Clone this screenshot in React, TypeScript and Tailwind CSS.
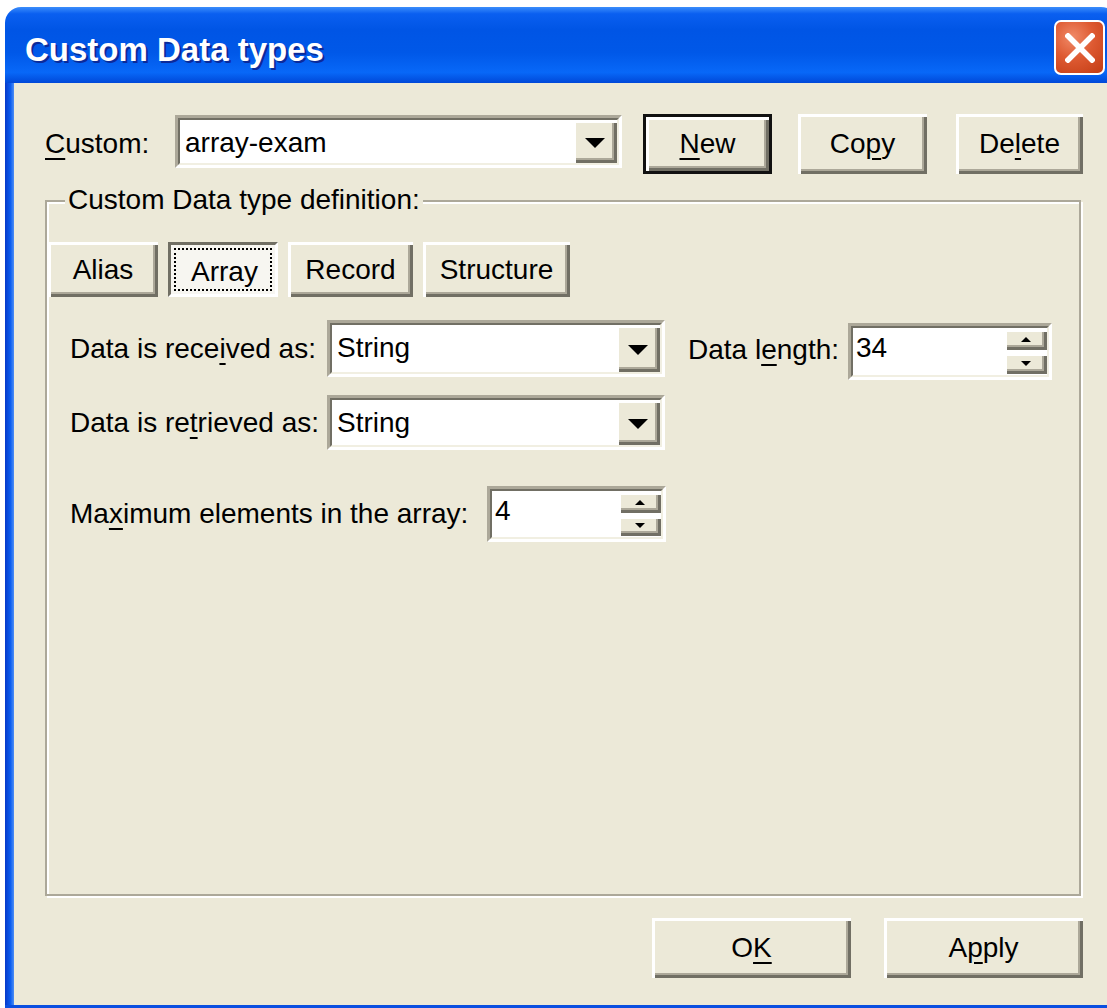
import type { ReactNode } from "react";

const FACE = "bg-[#ece9d8]";

// classic 3D raised edge: white top-left, dark bottom-right
const RAISED =
  "shadow-[inset_3px_3px_0_#ffffff,inset_-3px_-3px_0_#716f64,inset_-5px_-5px_0_#aca899]";

function Mn({ children }: { children: ReactNode }) {
  return <span className="underline decoration-2 underline-offset-[5px]">{children}</span>;
}

function Button({
  children,
  className = "",
  isDefault = false,
}: {
  children: ReactNode;
  className?: string;
  isDefault?: boolean;
}) {
  if (isDefault) {
    return (
      <div className={`border-[3px] border-[#111] ${className}`}>
        <div className={`flex h-full w-full items-center justify-center ${FACE} ${RAISED}`}>
          {children}
        </div>
      </div>
    );
  }
  return (
    <div className={`flex items-center justify-center ${FACE} ${RAISED} ${className}`}>
      {children}
    </div>
  );
}

function Sunken({ children, className = "" }: { children: ReactNode; className?: string }) {
  return (
    <div
      className={`border-[3px] border-t-[#aca899] border-l-[#aca899] border-r-white border-b-white ${className}`}
    >
      <div className="flex h-full w-full border-[2px] border-t-[#716f64] border-l-[#716f64] border-r-[#f1efe2] border-b-[#f1efe2] bg-white">
        {children}
      </div>
    </div>
  );
}

function DownArrow({ w = 20, h = 10 }: { w?: number; h?: number }) {
  return (
    <svg width={w} height={h} viewBox={`0 0 ${w} ${h}`}>
      <polygon points={`0,0 ${w},0 ${w / 2},${h}`} fill="#000" />
    </svg>
  );
}

function UpArrow({ w = 10, h = 5 }: { w?: number; h?: number }) {
  return (
    <svg width={w} height={h} viewBox={`0 0 ${w} ${h}`}>
      <polygon points={`0,${h} ${w},${h} ${w / 2},0`} fill="#000" />
    </svg>
  );
}

function Combo({ value, className = "" }: { value: string; className?: string }) {
  return (
    <Sunken className={className}>
      <span className="flex-1 pl-[5px] pt-[1px] leading-[44px]">{value}</span>
      <div className={`w-[44px] flex items-center justify-center pt-[2px] ${FACE} ${RAISED}`}>
        <DownArrow />
      </div>
    </Sunken>
  );
}

function Spin({ value, className = "" }: { value: string; className?: string }) {
  return (
    <Sunken className={className}>
      <span className="flex-1 pl-[3px] leading-[40px]">{value}</span>
      <div className="flex w-[43px] flex-col gap-[3px] py-[1px]">
        <div className={`flex flex-1 items-center justify-center ${FACE} ${RAISED}`}>
          <UpArrow />
        </div>
        <div className={`flex flex-1 items-center justify-center ${FACE} ${RAISED}`}>
          <svg width={10} height={5} viewBox="0 0 10 5">
            <polygon points="0,0 10,0 5,5" fill="#000" />
          </svg>
        </div>
      </div>
    </Sunken>
  );
}

function TitleBar() {
  return (
    <div className="flex h-[76px] items-start justify-between bg-[linear-gradient(180deg,#3b8dfb_0%,#0a5ff0_9%,#0055e5_30%,#0058e8_60%,#0868f8_86%,#0048d8_100%)]">
      <span className="pl-[20px] pt-[26px] text-[33px] font-bold leading-none text-white [text-shadow:2px_2px_0_#0b2a9a]">
        Custom Data types
      </span>
      <div className="mr-[12px] mt-[13px] flex h-[55px] w-[51px] items-center justify-center rounded-[7px] border-2 border-white bg-[radial-gradient(circle_at_35%_30%,#f08a68_0%,#de5a32_45%,#c23c14_100%)]">
        <svg width={30} height={30} viewBox="0 0 30 30">
          <path d="M3 3 L27 27 M27 3 L3 27" stroke="#fff" strokeWidth={5.5} strokeLinecap="square" />
        </svg>
      </div>
    </div>
  );
}

function Tabs() {
  return (
    <div className="flex h-[55px] gap-[10px]">
      <Button className="w-[110px]">Alias</Button>
      <div className="w-[110px] border-[3px] border-t-[#716f64] border-l-[#716f64] border-r-white border-b-white bg-[#f7f6f1] p-[3px]">
        <div className="flex h-full w-full items-center justify-center border-2 border-dotted border-black pl-[3px] pt-[4px]">
          Array
        </div>
      </div>
      <Button className="w-[125px]">Record</Button>
      <Button className="w-[147px]">Structure</Button>
    </div>
  );
}

export default function App() {
  return (
    <div className="h-[1008px] w-[1107px] overflow-hidden bg-white font-['Liberation_Sans',Arial,sans-serif] text-[28px] text-black">
      <div className="ml-[5px] mt-[7px] flex w-[1112px] flex-col overflow-hidden rounded-t-[16px]">
        <TitleBar />
        <div className="flex">
          <div className="w-[9px] bg-[linear-gradient(90deg,#0638c8,#0a5cf0_60%,#4d8ef5)]" />
          <div className={`h-[922px] flex-1 ${FACE} pl-[31px] pt-[31px]`}>
            <div className="w-[1038px]">
              {/* top row: custom type picker and actions */}
              <div className="flex items-start">
                <div className="flex h-[60px] w-[130px] items-center">
                  <span>
                    <Mn>C</Mn>ustom:
                  </span>
                </div>
                <Combo value="array-exam" className="mt-[1px] h-[53px] w-[447px]" />
                <Button isDefault className="ml-[21px] h-[60px] w-[129px]">
                  <span>
                    <Mn>N</Mn>ew
                  </span>
                </Button>
                <Button className="ml-[26px] h-[60px] w-[129px]">
                  <span>
                    Co<Mn>p</Mn>y
                  </span>
                </Button>
                <Button className="ml-[29px] h-[60px] w-[127px]">
                  <span>
                    De<Mn>l</Mn>ete
                  </span>
                </Button>
              </div>

              {/* definition group */}
              <div className="relative mt-[26px] h-[696px] w-[1036px] border-2 border-[#aca899] pl-[1px] pt-[40px] shadow-[inset_2px_2px_0_#fff,2px_2px_0_#fff]">
                <span className={`absolute left-[18px] top-[-18px] px-[3px] leading-[32px] ${FACE}`}>
                  Custom Data type definition:
                </span>
                <Tabs />
                <div className="pl-[22px] pt-[23px]">
                  <div className="flex items-start">
                    <div className="flex h-[57px] w-[257px] items-center">
                      <span>
                        Data is rece<Mn>i</Mn>ved as:
                      </span>
                    </div>
                    <Combo value="String" className="h-[57px] w-[338px]" />
                    <div className="ml-[23px] flex h-[60px] w-[160px] items-center">
                      <span>
                        Data l<Mn>e</Mn>ngth:
                      </span>
                    </div>
                    <Spin value="34" className="mt-[3px] h-[57px] w-[204px]" />
                  </div>
                  <div className="mt-[15px] flex items-start">
                    <div className="flex h-[55px] w-[257px] items-center">
                      <span>
                        Data is re<Mn>t</Mn>rieved as:
                      </span>
                    </div>
                    <Combo value="String" className="h-[55px] w-[338px]" />
                  </div>
                  <div className="mt-[36px] flex items-start">
                    <div className="flex h-[56px] w-[417px] items-center">
                      <span>
                        Ma<Mn>x</Mn>imum elements in the array:
                      </span>
                    </div>
                    <Spin value="4" className="h-[56px] w-[179px]" />
                  </div>
                </div>
              </div>

              {/* dialog buttons */}
              <div className="mt-[22px] flex justify-end">
                <Button className="h-[60px] w-[199px]">
                  <span>
                    O<Mn>K</Mn>
                  </span>
                </Button>
                <Button className="ml-[33px] h-[60px] w-[199px]">
                  <span>
                    A<Mn>p</Mn>ply
                  </span>
                </Button>
              </div>
            </div>
          </div>
        </div>
        <div className="h-[10px] bg-[#0a4fe0]" />
      </div>
    </div>
  );
}
